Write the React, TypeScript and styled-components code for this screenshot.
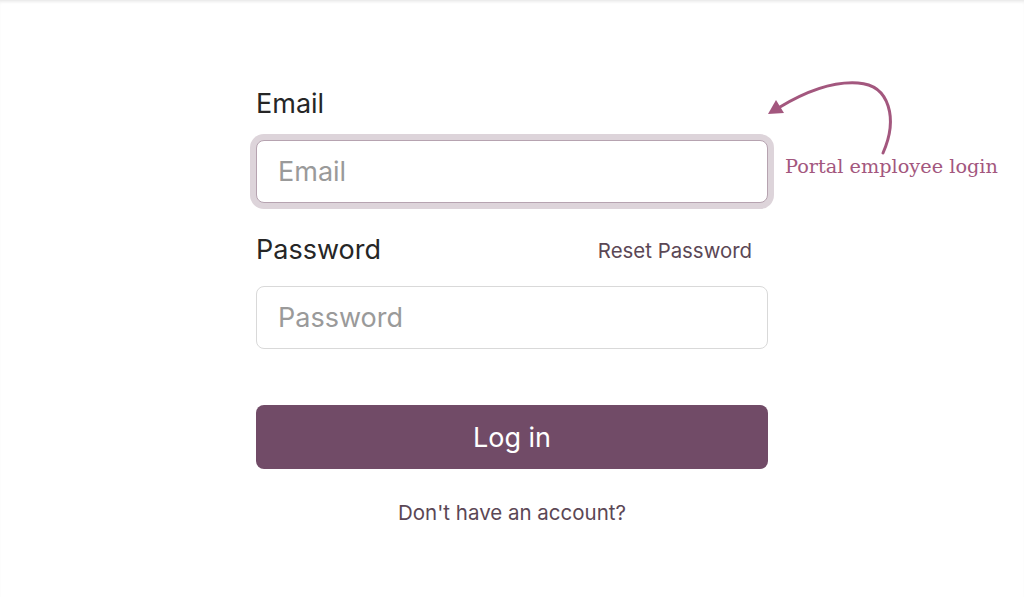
import React from 'react';
import styled, { createGlobalStyle } from 'styled-components';

const GlobalStyle = createGlobalStyle`
  html, body {
    margin: 0;
    padding: 0;
    background: #ffffff;
  }
  body {
    font-family: 'Inter', 'Noto Sans', sans-serif;
    color: #262626;
  }
`;

const Page = styled.div`
  min-height: 597px;
  box-sizing: border-box;
  border-top: 1px solid #ececec;
  box-shadow: inset 0 2px 3px -1px rgba(0, 0, 0, 0.08);
`;

const Form = styled.form`
  position: relative;
  width: 512px;
  margin: 0 auto;
  padding-top: 88px;
  display: flex;
  flex-direction: column;
`;

const LabelRow = styled.div`
  display: flex;
  align-items: center;
  justify-content: space-between;
  height: 30px;
  margin-bottom: 21px;
`;

const Label = styled.label`
  font-size: 27px;
  line-height: 30px;
  color: #262626;
`;

const ResetLink = styled.a`
  font-size: 20.4px;
  color: #5b4755;
  text-decoration: none;
  margin-right: 16px;
  cursor: pointer;
`;

const Input = styled.input<{ $focused?: boolean }>`
  box-sizing: border-box;
  width: 100%;
  height: 63px;
  padding: 0 21px;
  font-family: 'Inter', 'Noto Sans', sans-serif;
  font-size: 27px;
  color: #262626;
  background: #fff;
  border: 1px solid ${(p) => (p.$focused ? '#b6a3b0' : '#d9d9d9')};
  border-radius: 8px;
  outline: none;
  box-shadow: ${(p) => (p.$focused ? '0 0 0 6px #ddd4da' : 'none')};
  margin-bottom: 32px;

  &::placeholder {
    color: #9a9a9a;
  }
`;

const Submit = styled.button`
  height: 64px;
  margin-top: 24px;
  border: none;
  border-radius: 8px;
  background: #714b67;
  color: #ffffff;
  font-family: 'Inter', 'Noto Sans', sans-serif;
  font-size: 27px;
  cursor: pointer;
`;

const SignupLink = styled.a`
  margin-top: 32px;
  text-align: center;
  font-size: 20.5px;
  line-height: 24px;
  color: #5b4755;
  cursor: pointer;
`;

const Arrow = styled.svg`
  position: absolute;
  left: 505px;
  top: 77px;
  overflow: visible;
`;

const Note = styled.span`
  position: absolute;
  left: 529px;
  top: 154px;
  white-space: nowrap;
  font-family: 'DejaVu Serif', 'Liberation Serif', serif;
  font-size: 19.3px;
  line-height: 24px;
  color: #a3577e;
`;

const App: React.FC = () => {
  return (
    <Page>
      <GlobalStyle />
      <Form onSubmit={(e) => e.preventDefault()}>
        <LabelRow>
          <Label htmlFor="login">Email</Label>
        </LabelRow>
        <Input id="login" type="text" placeholder="Email" $focused />

        <LabelRow>
          <Label htmlFor="password">Password</Label>
          <ResetLink>Reset Password</ResetLink>
        </LabelRow>
        <Input id="password" type="password" placeholder="Password" />

        <Submit type="submit">Log in</Submit>
        <SignupLink>Don't have an account?</SignupLink>

        <Arrow width="140" height="90" viewBox="0 0 140 90">
          <path
            d="M122 75 C137 41, 129 7, 97 5 C69 3, 39 17, 19 29"
            fill="none"
            stroke="#a3577e"
            strokeWidth="3"
            strokeLinecap="round"
          />
          <polygon points="7,36 23,35 15,22" fill="#a3577e" />
        </Arrow>
        <Note>Portal employee login</Note>
      </Form>
    </Page>
  );
};

export default App;
